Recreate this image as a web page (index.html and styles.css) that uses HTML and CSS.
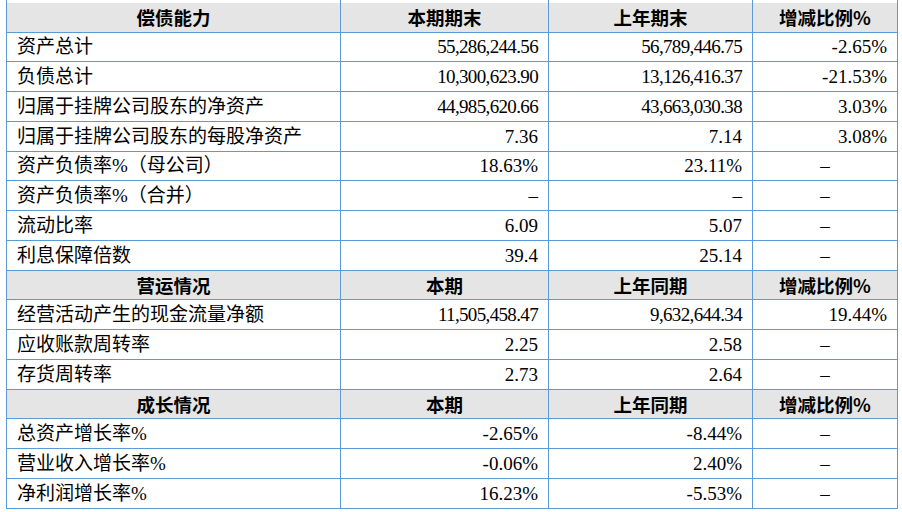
FILE: index.html
```html
<!DOCTYPE html>
<html lang="zh-CN">
<head>
<meta charset="utf-8">
<title>财务指标</title>
<link rel="stylesheet" href="styles.css">
</head>
<body>
<table class="fin">
  <colgroup>
    <col class="c1"><col class="c2"><col class="c3"><col class="c4">
  </colgroup>
  <tbody>
    <tr class="head first"><th>偿债能力</th><th>本期期末</th><th>上年期末</th><th>增减比例%</th></tr>
    <tr><td class="lbl">资产总计</td><td class="num big">55,286,244.56</td><td class="num big">56,789,446.75</td><td class="num">-2.65%</td></tr>
    <tr><td class="lbl">负债总计</td><td class="num big">10,300,623.90</td><td class="num big">13,126,416.37</td><td class="num">-21.53%</td></tr>
    <tr><td class="lbl">归属于挂牌公司股东的净资产</td><td class="num big">44,985,620.66</td><td class="num big">43,663,030.38</td><td class="num">3.03%</td></tr>
    <tr><td class="lbl">归属于挂牌公司股东的每股净资产</td><td class="num">7.36</td><td class="num">7.14</td><td class="num">3.08%</td></tr>
    <tr><td class="lbl">资产负债率%（母公司）</td><td class="num">18.63%</td><td class="num">23.11%</td><td class="ctr">–</td></tr>
    <tr><td class="lbl">资产负债率%（合并）</td><td class="num">–</td><td class="num">–</td><td class="ctr">–</td></tr>
    <tr><td class="lbl">流动比率</td><td class="num">6.09</td><td class="num">5.07</td><td class="ctr">–</td></tr>
    <tr><td class="lbl">利息保障倍数</td><td class="num">39.4</td><td class="num">25.14</td><td class="ctr">–</td></tr>
    <tr class="head"><th>营运情况</th><th>本期</th><th>上年同期</th><th>增减比例%</th></tr>
    <tr><td class="lbl">经营活动产生的现金流量净额</td><td class="num big">11,505,458.47</td><td class="num big">9,632,644.34</td><td class="num">19.44%</td></tr>
    <tr><td class="lbl">应收账款周转率</td><td class="num">2.25</td><td class="num">2.58</td><td class="ctr">–</td></tr>
    <tr><td class="lbl">存货周转率</td><td class="num">2.73</td><td class="num">2.64</td><td class="ctr">–</td></tr>
    <tr class="head"><th>成长情况</th><th>本期</th><th>上年同期</th><th>增减比例%</th></tr>
    <tr><td class="lbl">总资产增长率%</td><td class="num">-2.65%</td><td class="num">-8.44%</td><td class="ctr">–</td></tr>
    <tr><td class="lbl">营业收入增长率%</td><td class="num">-0.06%</td><td class="num">2.40%</td><td class="ctr">–</td></tr>
    <tr><td class="lbl">净利润增长率%</td><td class="num">16.23%</td><td class="num">-5.53%</td><td class="ctr">–</td></tr>
  </tbody>
</table>
</body>
</html>
```
FILE: styles.css
```css
html, body {
  margin: 0;
  padding: 0;
  background: #ffffff;
}

.fin {
  margin-left: 6px;
  width: 891px;
  table-layout: fixed;
  border-collapse: collapse;
  color: #000;
}

.c1 { width: 334px; }
.c2 { width: 208px; }
.c3 { width: 204px; }
.c4 { width: 145px; }

.fin th,
.fin td {
  border: 1px solid #5b9bd5;
  padding: 0 10px;
  height: 29.75px;
  box-sizing: border-box;
  vertical-align: middle;
  white-space: nowrap;
  overflow: hidden;
}

.fin tr:first-child th {
  border-top: none;
}

.head th {
  background: #e5e5e5;
  font-family: "Noto Sans CJK SC", "Liberation Sans", sans-serif;
  font-weight: 700;
  font-size: 18.5px;
  text-align: center;
  line-height: 1;
}

.first th {
  height: 32px;
  background: linear-gradient(#ffffff 0, #ffffff 3px, #e5e5e5 3px);
  padding-top: 3px;
}

.lbl {
  font-family: "Liberation Serif", "Noto Sans CJK SC", serif;
  font-size: 19px;
  line-height: 1;
  text-align: left;
  padding-left: 10px;
}

.num {
  font-family: "Liberation Serif", serif;
  font-size: 19px;
  line-height: 1;
  text-align: right;
}

.big {
  letter-spacing: -0.65px;
}

.ctr {
  font-family: "Liberation Serif", serif;
  font-size: 19px;
  line-height: 1;
  text-align: center;
}
```
